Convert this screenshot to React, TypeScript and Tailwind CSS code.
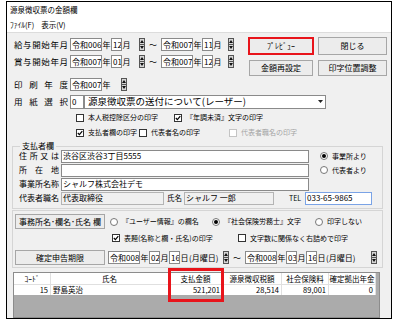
import { FC, ReactNode } from "react";

type P = { children?: ReactNode; className?: string };

const Spin: FC = () => (
  <svg width="6" height="13" viewBox="0 0 6 13" className="shrink-0">
    <rect x="0.5" y="0.5" width="5" height="12" fill="#d6d6d6" stroke="#555" />
    <line x1="0" y1="6.5" x2="6" y2="6.5" stroke="#555" />
    <path d="M3 2 L5 5 L1 5 Z" fill="#111" />
    <path d="M1 8 L5 8 L3 11 Z" fill="#111" />
  </svg>
);

const Box: FC<P> = ({ children, className = "" }) => (
  <div
    className={`h-[13px] shrink-0 border border-[#8a8a8a] bg-white flex items-center px-[1px] text-[8px] leading-none whitespace-nowrap overflow-hidden ${className}`}
  >
    {children}
  </div>
);

const Unit: FC<P> = ({ children }) => (
  <span className="w-[9px] shrink-0 text-center text-[8px] leading-none">{children}</span>
);

const Label: FC<P> = ({ children, className = "" }) => (
  <div className={`shrink-0 leading-none [text-align-last:justify] ${className}`}>{children}</div>
);

const Check: FC<P & { on?: boolean; off?: boolean }> = ({ on, off, children, className = "" }) => (
  <div
    className={`flex items-center gap-[4px] text-[7px] leading-none whitespace-nowrap shrink-0 ${
      off ? "text-[#a3a3a3]" : ""
    } ${className}`}
  >
    <span
      className={`w-[8px] h-[8px] shrink-0 border bg-white flex items-center justify-center ${
        off ? "border-[#c4c4c4]" : "border-[#333]"
      }`}
    >
      {on && (
        <svg width="6" height="6" viewBox="0 0 6 6">
          <path d="M0.8 3 L2.4 4.6 L5.3 1.2" stroke="#000" strokeWidth="1.2" fill="none" />
        </svg>
      )}
    </span>
    {children}
  </div>
);

const Radio: FC<P & { on?: boolean }> = ({ on, children, className = "" }) => (
  <div className={`flex items-center gap-[4px] text-[7px] leading-none whitespace-nowrap shrink-0 ${className}`}>
    <span className="w-[8px] h-[8px] shrink-0 rounded-full border border-[#777] bg-white flex items-center justify-center">
      {on && <span className="w-[4px] h-[4px] rounded-full bg-black" />}
    </span>
    {children}
  </div>
);

const Btn: FC<P> = ({ children, className = "" }) => (
  <div
    className={`shrink-0 border border-[#a6a6a6] bg-[#ececec] flex items-center justify-center text-[8px] leading-none whitespace-nowrap ${className}`}
  >
    {children}
  </div>
);

const cols = [
  { w: "w-[37px]", h: "ｺｰﾄﾞ", v: "15", left: false },
  { w: "w-[118px]", h: "氏名", v: "野島英治", left: true },
  { w: "w-[54px]", h: "支払金額", v: "521,201", left: false },
  { w: "w-[59px]", h: "源泉徴収税額", v: "28,514", left: false },
  { w: "w-[47px]", h: "社会保険料", v: "89,001", left: false },
  { w: "w-[47px]", h: "確定拠出年金", v: "0", left: false },
];

export default function App() {
  return (
    <div className="w-[397px] h-[326px] bg-white pl-[6px] pt-[1px] font-['Noto_Sans_CJK_JP',sans-serif] text-black">
      <div className="w-[386px] h-[318px] border border-black flex flex-col">
        <div className="h-[16px] flex items-center pl-[3px] text-[7.5px] leading-none">源泉徴収票の金額欄</div>
        <div className="h-[17px] flex items-center gap-[7px] pl-[3px] text-[7.5px] leading-none border-b border-[#dcdcdc]">
          <span>ﾌｧｲﾙ(F)</span>
          <span>表示(V)</span>
        </div>

        <div className="flex-1 bg-[#f0f0f0] flex flex-col">
          <div className="flex">
            <div className="w-[241px] pl-[7px] pt-[3px] flex flex-col">
              <div className="h-[17px] flex items-center">
                <Label className="w-[54px] text-[8.5px]">給与開始年月</Label>
                <Box className="ml-[2px] w-[32px]">令和006</Box>
                <Unit>年</Unit>
                <Box className="w-[11px]">12</Box>
                <Unit>月</Unit>
                <div className="ml-[8px]"><Spin /></div>
                <span className="ml-[4px] w-[9px] text-[8px] leading-none">～</span>
                <Box className="ml-[3px] w-[32px]">令和007</Box>
                <Unit>年</Unit>
                <Box className="w-[11px]">11</Box>
                <Unit>月</Unit>
                <div className="ml-[6px]"><Spin /></div>
              </div>
              <div className="h-[17px] flex items-center">
                <Label className="w-[54px] text-[8.5px]">賞与開始年月</Label>
                <Box className="ml-[2px] w-[32px]">令和007</Box>
                <Unit>年</Unit>
                <Box className="w-[11px]">01</Box>
                <Unit>月</Unit>
                <div className="ml-[8px]"><Spin /></div>
                <span className="ml-[4px] w-[9px] text-[8px] leading-none">～</span>
                <Box className="ml-[3px] w-[32px]">令和007</Box>
                <Unit>年</Unit>
                <Box className="w-[11px]">12</Box>
                <Unit>月</Unit>
                <div className="ml-[6px]"><Spin /></div>
              </div>
            </div>
            <div className="flex flex-col pt-[4px] gap-[5px]">
              <div className="flex gap-[4px]">
                <div className="w-[66px] h-[18px] border-2 border-[#e8141b] bg-[#ececec] flex items-center justify-center text-[8px] leading-none">
                  ﾌﾟﾚﾋﾞｭｰ
                </div>
                <Btn className="w-[69px] h-[18px]">閉じる</Btn>
              </div>
              <div className="flex gap-[5px] pl-[1px]">
                <Btn className="w-[64px] h-[16px]">金額再設定</Btn>
                <Btn className="w-[69px] h-[16px]">印字位置調整</Btn>
              </div>
            </div>
          </div>

          <div className="pl-[7px] flex flex-col">
            <div className="h-[17px] flex items-center">
              <Label className="w-[54px] text-[8.5px]">印刷年度</Label>
              <Box className="ml-[2px] w-[32px]">令和007</Box>
              <Unit>年</Unit>
              <div className="ml-[10px]"><Spin /></div>
            </div>
            <div className="h-[17px] flex items-center">
              <Label className="w-[54px] text-[8.5px]">用紙選択</Label>
              <Box className="ml-[2px] w-[14px] h-[14px]">0</Box>
              <div className="w-[242px] h-[14px] border border-[#8a8a8a] bg-white flex items-center">
                <span className="flex-1 pl-[3px] text-[9.5px] leading-none whitespace-nowrap">
                  源泉徴収票の送付について(レーザー)
                </span>
                <div className="w-[9px] h-full flex items-center justify-center">
                  <svg width="5" height="3" viewBox="0 0 5 3">
                    <path d="M0 0 L5 0 L2.5 3 Z" fill="#222" />
                  </svg>
                </div>
              </div>
            </div>
            <div className="h-[15px] flex items-center pl-[62px]">
              <Check className="w-[98px]">本人税控除区分の印字</Check>
              <Check on>『年調未済』文字の印字</Check>
            </div>
            <div className="h-[15px] flex items-center pl-[62px]">
              <Check on className="w-[63px]">支払者欄の印字</Check>
              <Check className="w-[90px]">代表者名の印字</Check>
              <Check off>代表者職名の印字</Check>
            </div>
          </div>

          <div className="mt-[6px] ml-[5px] w-[371px] border border-[#d5d5d5] flex flex-col pb-[4px]">
            <div className="-mt-[5px] ml-[7px] px-[2px] w-fit bg-[#f0f0f0] text-[8px] leading-none">支払者欄</div>
            <div className="flex flex-col gap-[2px] pl-[6px]">
              <div className="h-[12px] flex items-center">
                <Label className="w-[40px] text-[8px]">住所又は</Label>
                <Box className="ml-[2px] w-[248px] h-[12px]">渋谷区渋谷3丁目5555</Box>
                <Radio on className="ml-[11px]">事業所より</Radio>
              </div>
              <div className="h-[12px] flex items-center">
                <Label className="w-[40px] text-[8px]">所在地</Label>
                <Box className="ml-[2px] w-[248px] h-[12px]" />
                <Radio className="ml-[11px]">代表者より</Radio>
              </div>
              <div className="h-[12px] flex items-center">
                <Label className="w-[40px] text-[8px]">事業所名称</Label>
                <Box className="ml-[2px] w-[248px] h-[12px]">シャルフ株式会社デモ</Box>
              </div>
              <div className="h-[12px] flex items-center">
                <Label className="w-[40px] text-[8px]">代表者職名</Label>
                <Box className="ml-[2px] w-[103px] h-[12px] !bg-[#f0f0f0] !border-[#b4b4b4]">代表取締役</Box>
                <span className="ml-[3px] w-[17px] shrink-0 text-[7.5px] leading-none whitespace-nowrap">氏名</span>
                <Box className="w-[90px] h-[12px] !bg-[#f0f0f0] !border-[#b4b4b4]">シャルフ 一郎</Box>
                <span className="ml-[15px] w-[16px] shrink-0 text-[7px] leading-none whitespace-nowrap">TEL</span>
                <Box className="w-[67px] h-[12px] !border-[#7aa3e6]">033-65-9865</Box>
              </div>
            </div>
          </div>

          <div className="mt-[1px] ml-[5px] w-[371px] border border-[#d5d5d5] flex flex-col pb-[2px]">
            <div className="mt-[3px] h-[15px] flex items-center pl-[2px]">
              <Btn className="w-[90px] h-[15px]">事務所名･欄名･氏名 欄</Btn>
              <Radio className="ml-[5px] w-[102px]">『ユーザー情報』の欄名</Radio>
              <Radio on className="w-[103px]">『社会保険労務士』文字</Radio>
              <Radio>印字しない</Radio>
            </div>
            <div className="mt-[2px] h-[14px] flex items-center pl-[99px]">
              <Check on className="w-[126px]">表題(名称と欄・氏名)の印字</Check>
              <Check>文字数に関係なく右詰めで印字</Check>
            </div>
            <div className="mt-[5px] h-[15px] flex items-center pl-[2px]">
              <Btn className="w-[90px] h-[15px]">確定申告期限</Btn>
              <Box className="ml-[3px] w-[32px]">令和008</Box>
              <Unit>年</Unit>
              <Box className="w-[11px]">02</Box>
              <Unit>月</Unit>
              <Box className="w-[11px]">16</Box>
              <Unit>日</Unit>
              <span className="w-[30px] text-[8px] leading-none whitespace-nowrap">(月曜日)</span>
              <div className="ml-[4px]"><Spin /></div>
              <span className="ml-[4px] w-[9px] text-[8px] leading-none">～</span>
              <Box className="ml-[3px] w-[32px]">令和008</Box>
              <Unit>年</Unit>
              <Box className="w-[11px]">03</Box>
              <Unit>月</Unit>
              <Box className="w-[11px]">16</Box>
              <Unit>日</Unit>
              <span className="w-[30px] text-[8px] leading-none whitespace-nowrap">(月曜日)</span>
              <div className="ml-[15px]"><Spin /></div>
            </div>
          </div>

          <div className="relative mt-[4px] ml-[6px] w-[367px] h-[46px] border border-[#8c8c8c] bg-[#ababab]">
            <div className="flex h-[12px] bg-white w-fit">
              {cols.map((c) => (
                <div
                  key={c.h}
                  className={`${c.w} h-full border-r border-b border-[#e0e0e0] flex items-center justify-center text-[7.5px] leading-none whitespace-nowrap`}
                >
                  {c.h}
                </div>
              ))}
            </div>
            <div className="flex h-[10px] bg-white w-fit">
              {cols.map((c) => (
                <div
                  key={c.h}
                  className={`${c.w} h-full border-r border-[#e0e0e0] flex items-center px-[2px] text-[7.5px] leading-none whitespace-nowrap ${
                    c.left ? "justify-start" : "justify-end"
                  }`}
                >
                  {c.v}
                </div>
              ))}
            </div>
            <div className="absolute left-[154px] top-[-5px] w-[56px] h-[34px] border-[3px] border-[#e8141b]" />
          </div>
        </div>
      </div>
    </div>
  );
}
